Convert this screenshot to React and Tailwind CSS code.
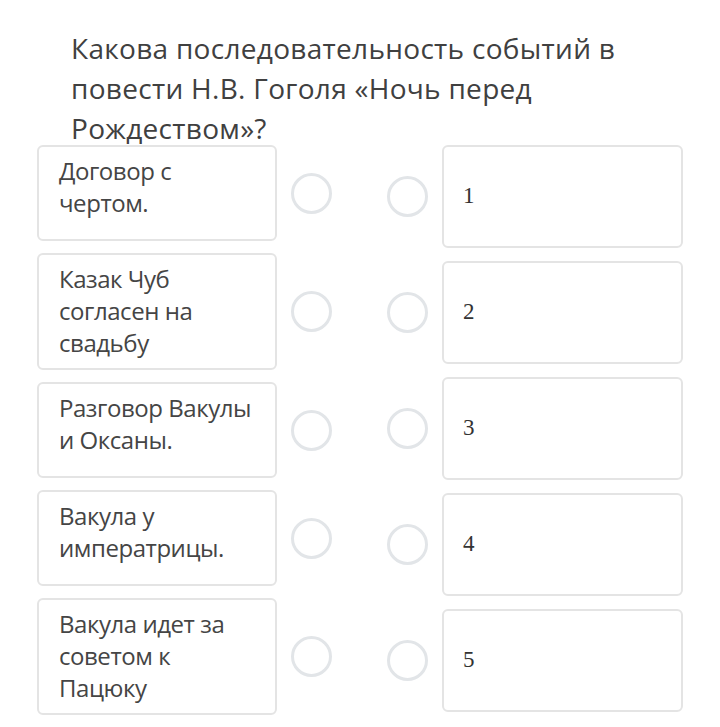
const leftItems = [
  ['Договор с', 'чертом.'],
  ['Казак Чуб', 'согласен на', 'свадьбу'],
  ['Разговор Вакулы', 'и Оксаны.'],
  ['Вакула у', 'императрицы.'],
  ['Вакула идет за', 'советом к', 'Пацюку'],
];

const rightItems = ['1', '2', '3', '4', '5'];

function Radio() {
  return <div className="h-[41px] w-[41px] shrink-0 rounded-full border-[3px] border-[#e2e5e8] bg-white" />;
}

export default function App() {
  return (
    <div className="min-h-[727px] bg-white" style={{ fontFamily: '"Open Sans", "Noto Sans", sans-serif' }}>
      <h1 className="-mb-[3px] w-[640px] pl-[71px] pt-[28px] text-[28px] font-normal leading-[40px] tracking-[0.3px] text-[#404040]">
        <span className="block">Какова последовательность событий в</span>
        <span className="block">повести Н.В. Гоголя «Ночь перед</span>
        <span className="block">Рождеством»?</span>
      </h1>

      <div className="flex gap-[55px] pl-[37px]">
        <div className="flex flex-col gap-[12px]">
          {leftItems.map((lines) => (
            <div key={lines.join(' ')} className="flex items-center gap-[14px]">
              <div className="min-h-[96px] w-[240px] rounded-[6px] border-2 border-[#e4e4e4] pb-[9px] pl-[20px] pr-[10px] pt-[8px] text-[24px] leading-[32px] tracking-[-0.45px] text-[#454545]">
                {lines.map((line) => (
                  <span key={line} className="block whitespace-nowrap">{line}</span>
                ))}
              </div>
              <Radio />
            </div>
          ))}
        </div>

        <div className="flex flex-col gap-[13px]">
          {rightItems.map((n) => (
            <div key={n} className="flex items-center gap-[14px]">
              <Radio />
              <div
                className="flex h-[103px] w-[241px] items-center rounded-[6px] border-2 border-[#e4e4e4] pl-[19px] text-[23px] text-[#333]"
                style={{ fontFamily: '"Liberation Serif", "DejaVu Serif", serif' }}
              >
                {n}
              </div>
            </div>
          ))}
        </div>
      </div>
    </div>
  );
}
